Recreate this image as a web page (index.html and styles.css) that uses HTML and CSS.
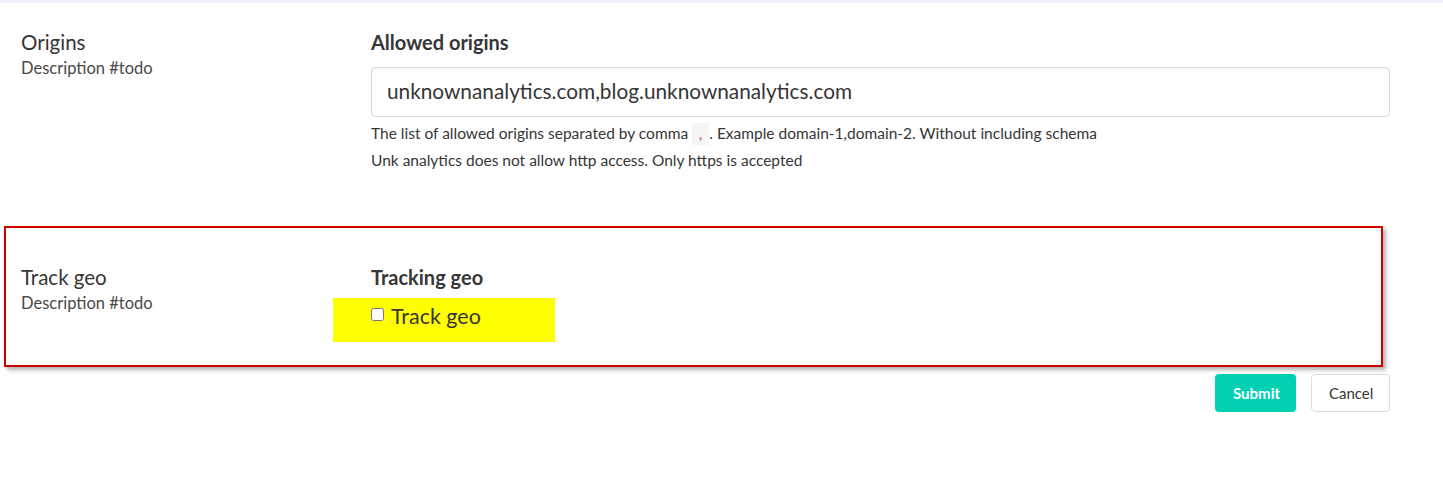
FILE: index.html
```html
<!DOCTYPE html>
<html lang="en">
<head>
<meta charset="utf-8">
<title>Settings</title>
<link rel="stylesheet" href="styles.css">
</head>
<body>
<div class="topbar"></div>
<main class="page">
  <section class="row row-origins">
    <div class="side">
      <div class="side-title">Origins</div>
      <div class="side-desc">Description #todo</div>
    </div>
    <div class="field">
      <label class="label">Allowed origins</label>
      <input class="input" type="text" value="unknownanalytics.com,blog.unknownanalytics.com">
      <p class="help">The list of allowed origins separated by comma <code class="code">,</code>. Example domain-1,domain-2. Without including schema</p>
      <p class="help">Unk analytics does not allow http access. Only https is accepted</p>
    </div>
  </section>
  <section class="row row-geo">
    <div class="side">
      <div class="side-title">Track geo</div>
      <div class="side-desc">Description #todo</div>
    </div>
    <div class="field">
      <label class="label">Tracking geo</label>
      <div class="highlight">
        <label class="checkbox"><input type="checkbox" class="check"> Track geo</label>
      </div>
    </div>
  </section>
  <div class="actions">
    <button class="btn btn-primary" type="button">Submit</button>
    <button class="btn btn-light" type="button">Cancel</button>
  </div>
</main>
</body>
</html>
```
FILE: styles.css
```css
* { box-sizing: border-box; }
html, body { margin: 0; padding: 0; background: #fff; }
body {
  font-family: Lato, "Open Sans", sans-serif;
  color: #4a4a4a;
  font-size: 16px;
}
.topbar { height: 3px; background: #eff0f5; }
.page { padding: 0 53px 0 4px; }
.row { display: flex; }
.row-origins { padding: 27px 0 0 17px; }
.side { width: 350px; flex: none; }
.side-title { font-size: 20.5px; line-height: 24px; color: #363636; }
.side-desc { font-size: 16.5px; line-height: 20px; margin-top: 4px; color: #4a4a4a; }
.field { flex: 1; }
.label { display: block; font-size: 20px; font-weight: 700; line-height: 24px; color: #363636; }
.input {
  display: block; width: 100%; height: 50px; margin-top: 13px;
  border: 1px solid #dbdbdb; border-radius: 4px;
  padding: 0 15px 3px; font-family: inherit; font-size: 20.8px; color: #363636;
  box-shadow: inset 0 1px 2px rgba(10,10,10,.06);
}
.help { margin: 6px 0 0; font-size: 15.5px; line-height: 20px; color: #363636; }
.help + .help { margin-top: 5px; }
.code {
  display: inline-block; background: #f5f5f5; color: #da1039;
  font-family: inherit; font-size: 14px; padding: 0 7px; line-height: 22px;
}
.row-geo {
  margin-top: 56px; margin-right: 7px;
  border: 2px solid #cc0000;
  box-shadow: 3px 3px 4px rgba(0,0,0,.3);
  padding: 37px 0 22px 15px;
  height: 141px;
}
.highlight {
  background: #ffff00; margin-left: -38px; width: 222px; height: 44px; margin-top: 9px;
  padding: 5px 0 0 38px;
}
.checkbox { font-size: 21.5px; color: #363636; display: inline-flex; align-items: center; gap: 7px; line-height: 26px; }
.check { margin: 0; width: 13px; height: 13px; position: relative; top: -2px; }
.actions { display: flex; justify-content: flex-end; gap: 15px; margin-top: 7px; }
.btn {
  height: 38px; border-radius: 4px; font-family: inherit; font-size: 15px;
  padding: 0 17px; cursor: pointer;
}
.btn-primary { background: #00d1b2; color: #fff; border: 1px solid transparent; font-weight: 700; width: 81px; }
.btn-light { background: #fff; color: #363636; border: 1px solid #dbdbdb; width: 79px; }
```
